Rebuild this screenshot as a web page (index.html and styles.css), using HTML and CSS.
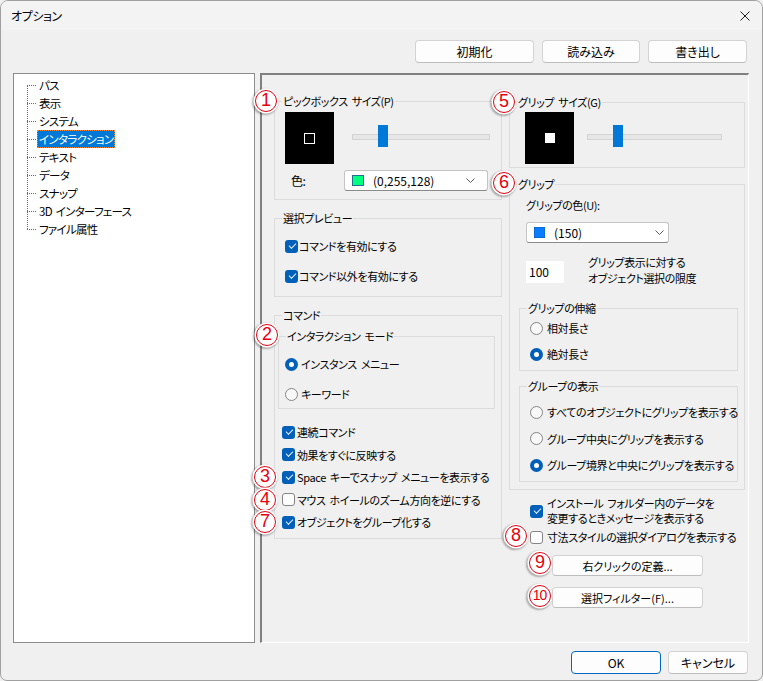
FILE: index.html
```html
<!DOCTYPE html>
<html lang="ja">
<head>
    <meta charset="UTF-8">
    <title>オプション</title>
    <link rel="stylesheet" href="styles.css">
</head>
<body>
<div class="window">
    <div class="titlebar">
        <span class="title">オプション</span>
        <svg class="close" width="10" height="10" viewBox="0 0 10 10">
            <path d="M0.5 0.5L9.5 9.5M9.5 0.5L0.5 9.5" stroke="#1b1b1b" stroke-width="1"/>
        </svg>
    </div>

    <div class="toolbar">
        <button class="btn" id="btn-init">初期化</button>
        <button class="btn" id="btn-load">読み込み</button>
        <button class="btn" id="btn-save">書き出し</button>
    </div>

    <div class="main">
        <ul class="tree">
            <li><span>パス</span></li>
            <li><span>表示</span></li>
            <li><span>システム</span></li>
            <li class="selected"><span>インタラクション</span></li>
            <li><span>テキスト</span></li>
            <li><span>データ</span></li>
            <li><span>スナップ</span></li>
            <li><span>3D インターフェース</span></li>
            <li><span>ファイル属性</span></li>
        </ul>

        <div class="panel">
            <div class="col-left">
                <fieldset class="group">
                    <legend>ピックボックス サイズ(P)</legend>
                    <div class="pick-body">
                        <div class="size-row">
                            <div class="preview"><div class="pick-square"></div></div>
                            <div class="slider slider-pick"><div class="thumb" style="left: 26px"></div></div>
                        </div>
                        <div class="color-row">
                            <span class="color-label">色:</span>
                            <div class="combo combo-pick">
                                <span class="swatch" style="background: #00ff80"></span>
                                <span class="combo-text">(0,255,128)</span>
                                <svg class="chevron" width="9" height="5" viewBox="0 0 9 5"><path d="M0.5 0.5L4.5 4.5L8.5 0.5" fill="none" stroke="#5c5c5c"/></svg>
                            </div>
                        </div>
                    </div>
                </fieldset>

                <fieldset class="group group-preview">
                    <legend>選択プレビュー</legend>
                    <div class="preview-body">
                        <div class="check"><span class="cb on"></span>コマンドを有効にする</div>
                        <div class="check"><span class="cb on"></span>コマンド以外を有効にする</div>
                    </div>
                </fieldset>

                <fieldset class="group group-command">
                    <legend>コマンド</legend>
                    <div class="command-body">
                        <fieldset class="group">
                            <legend>インタラクション モード</legend>
                            <div class="mode-body">
                                <div class="radio"><span class="rb on"></span>インスタンス メニュー</div>
                                <div class="radio"><span class="rb"></span>キーワード</div>
                            </div>
                        </fieldset>
                        <div class="command-checks">
                            <div class="check"><span class="cb on"></span>連続コマンド</div>
                            <div class="check"><span class="cb on"></span>効果をすぐに反映する</div>
                            <div class="check"><span class="cb on"></span>Space キーでスナップ メニューを表示する</div>
                            <div class="check"><span class="cb off"></span>マウス ホイールのズーム方向を逆にする</div>
                            <div class="check"><span class="cb on"></span>オブジェクトをグループ化する</div>
                        </div>
                    </div>
                </fieldset>
            </div>

            <div class="col-right">
                <fieldset class="group">
                    <legend>グリップ サイズ(G)</legend>
                    <div class="gripsize-body">
                        <div class="size-row">
                            <div class="preview"><div class="grip-square"></div></div>
                            <div class="slider slider-grip"><div class="thumb" style="left: 26px"></div></div>
                        </div>
                    </div>
                </fieldset>

                <fieldset class="group group-grip">
                    <legend>グリップ</legend>
                    <div class="grip-body">
                        <div class="grip-label">グリップの色(U):</div>
                        <div class="combo combo-grip">
                            <span class="swatch" style="background: #0a7cff"></span>
                            <span class="combo-text">(150)</span>
                            <svg class="chevron" width="9" height="5" viewBox="0 0 9 5"><path d="M0.5 0.5L4.5 4.5L8.5 0.5" fill="none" stroke="#5c5c5c"/></svg>
                        </div>
                        <div class="limit-row">
                            <div class="textbox">100</div>
                            <div class="limit-label">グリップ表示に対する<br>オブジェクト選択の限度</div>
                        </div>
                        <fieldset class="group group-stretch">
                            <legend>グリップの伸縮</legend>
                            <div class="stretch-body">
                                <div class="radio"><span class="rb"></span>相対長さ</div>
                                <div class="radio"><span class="rb on"></span>絶対長さ</div>
                            </div>
                        </fieldset>
                        <fieldset class="group group-display">
                            <legend>グループの表示</legend>
                            <div class="display-body">
                                <div class="radio"><span class="rb"></span>すべてのオブジェクトにグリップを表示する</div>
                                <div class="radio"><span class="rb"></span>グループ中央にグリップを表示する</div>
                                <div class="radio"><span class="rb on"></span>グループ境界と中央にグリップを表示する</div>
                            </div>
                        </fieldset>
                    </div>
                </fieldset>

                <div class="check check-two"><span class="cb on"></span><span>インストール フォルダー内のデータを<br>変更するときメッセージを表示する</span></div>
                <div class="check check-dim"><span class="cb off"></span>寸法スタイルの選択ダイアログを表示する</div>
                <button class="btn btn-side btn-right">右クリックの定義...</button>
                <button class="btn btn-side btn-filter">選択フィルター(F)...</button>
            </div>

            <span class="mark m1">1</span>
            <span class="mark m2">2</span>
            <span class="mark m3">3</span>
            <span class="mark m4">4</span>
            <span class="mark m7">7</span>
            <span class="mark m5">5</span>
            <span class="mark m6">6</span>
            <span class="mark m8">8</span>
            <span class="mark m9">9</span>
            <span class="mark m10">10</span>
        </div>
    </div>

    <div class="footer">
        <button class="btn btn-ok">OK</button>
        <button class="btn btn-cancel">キャンセル</button>
    </div>
</div>
</body>
</html>
```

FILE: styles.css
```css
* {
    margin: 0;
    padding: 0;
    box-sizing: border-box;
}
body {
    font-family: "Noto Sans CJK JP", "Noto Sans", sans-serif;
    font-size: 11px;
    letter-spacing: -0.4px;
    word-spacing: 2px;
    font-feature-settings: "palt";
    color: #000;
    background: #f0f0f0;
}
.window {
    width: 763px;
    height: 681px;
    background: #f0f0f0;
    border: 1px solid #a0a0a0;
    border-radius: 8px 8px 7px 7px;
    overflow: hidden;
}
.titlebar {
    height: 29px;
    line-height: 29px;
    display: flex;
    align-items: center;
    justify-content: space-between;
    padding: 0 12px 0 10px;
    background: #f3f3f3;
}
.title {
    font-size: 12px;
}
.toolbar {
    display: flex;
    justify-content: flex-end;
    gap: 8px;
    padding: 10px 15px 0 0;
}
.btn {
    height: 23px;
    font: inherit;
    color: #000;
    background: #fdfdfd;
    border: 1px solid #d3d3d3;
    border-bottom-color: #bdbdbd;
    border-radius: 4px;
}
.toolbar .btn {
    font-size: 12px;
}
#btn-init { width: 119px; }
#btn-load { width: 98px; }
#btn-save { width: 99px; }

.main {
    display: flex;
    gap: 5px;
    padding-left: 12px;
    margin-top: 10px;
}
.tree {
    width: 242px;
    height: 570px;
    background: #fff;
    border: 1px solid #8c8c8c;
    list-style: none;
    padding-top: 2px;
    font-size: 11.5px;
    letter-spacing: -0.7px;
}
.tree li {
    position: relative;
    height: 18px;
    line-height: 18px;
    padding-left: 23px;
}
.tree li span {
    display: inline-block;
    height: 18px;
    padding: 0 2px;
}
.tree li::before {
    content: "";
    position: absolute;
    left: 13px;
    top: 9px;
    width: 9px;
    border-top: 1px dotted #6a6a6a;
}
.tree li::after {
    content: "";
    position: absolute;
    left: 13px;
    top: 9px;
    height: 18px;
    border-left: 1px dotted #6a6a6a;
}
.tree li:last-child::after {
    display: none;
}
.tree li.selected span {
    background: #0078d7;
    color: #fff;
    outline: 1px dotted #ff8728;
    outline-offset: -1px;
}

.panel {
    position: relative;
    display: flex;
    width: 489px;
    height: 570px;
    border-top: 2px solid #808080;
    border-left: 2px solid #808080;
    border-right: 1px solid #fff;
    border-bottom: 1px solid #fff;
}
.col-left {
    width: 228px;
    margin-left: 12px;
    padding-top: 18px;
}
.col-right {
    width: 236px;
    margin-left: 7px;
    padding-top: 19px;
}
.group {
    border: 1px solid #dcdcdc;
    min-width: 0;
}
.group legend {
    margin-left: 7px;
    padding: 0 1px;
    line-height: 16px;
}

/* rows */
.check, .radio {
    display: flex;
    align-items: center;
    height: 16px;
    line-height: 16px;
    white-space: nowrap;
}
.cb {
    position: relative;
    flex: none;
    width: 13px;
    height: 13px;
    margin-right: 2px;
    border-radius: 3px;
    background: #005fb8;
}
.cb.on::after {
    content: "";
    position: absolute;
    left: 3.5px;
    top: 3px;
    width: 6px;
    height: 3px;
    border-left: 1.2px solid #e8f0fa;
    border-bottom: 1.2px solid #e8f0fa;
    transform: rotate(-45deg);
}
.cb.off {
    background: #fdfdfd;
    border: 1px solid #858585;
}
.rb {
    position: relative;
    flex: none;
    width: 13px;
    height: 13px;
    margin-right: 3px;
    border-radius: 50%;
    border: 1px solid #858585;
    background: #f8f8f8;
}
.rb.on {
    border: none;
    background: #005fb8;
}
.rb.on::after {
    content: "";
    position: absolute;
    left: 4px;
    top: 4px;
    width: 5px;
    height: 5px;
    border-radius: 50%;
    background: #fff;
}

/* size previews and sliders */
.size-row {
    display: flex;
}
.preview {
    flex: none;
    width: 49px;
    height: 52px;
    background: #000;
    display: flex;
    align-items: center;
    justify-content: center;
}
.pick-square {
    width: 11px;
    height: 11px;
    border: 1.5px solid #fff;
}
.grip-square {
    width: 10px;
    height: 10px;
    background: #fff;
}
.slider {
    position: relative;
    height: 22px;
    margin-top: 13px;
}
.slider::before {
    content: "";
    position: absolute;
    left: 0;
    right: 0;
    top: 9px;
    height: 4px;
    background: #e7e7e7;
    border: 1px solid #d4d4d4;
}
.slider-pick {
    width: 138px;
    margin-left: 18px;
}
.slider-grip {
    width: 135px;
    margin-left: 13px;
}
.thumb {
    position: absolute;
    top: 0;
    width: 10px;
    height: 22px;
    background: #0078d7;
}

/* combo boxes */
.combo {
    display: flex;
    align-items: center;
    height: 21px;
    padding-left: 7px;
    background: #fff;
    border: 1px solid #c4c4c4;
    border-bottom-color: #8a8a8a;
    border-radius: 3px;
    font-size: 12px;
    letter-spacing: 0;
}
.swatch {
    flex: none;
    width: 12px;
    height: 11px;
    border: 1px solid #1f6f8f;
}
.combo-text {
    margin-left: 9px;
}
.chevron {
    margin-left: auto;
}
.combo-pick {
    width: 144px;
}
.combo-pick .chevron {
    margin-right: 12px;
}
.combo-grip {
    width: 143px;
    margin: 9px 0 0 7px;
}
.combo-grip .swatch {
    width: 11px;
    border-color: #0a6ad8;
}
.combo-grip .chevron {
    margin-right: 4px;
}

/* left column */
.pick-body {
    padding: 3px 0 8px 10px;
}
.color-row {
    display: flex;
    align-items: center;
    margin-top: 6px;
}
.color-label {
    width: 53px;
    margin-left: 6px;
    font-size: 12px;
}
.group-preview {
    margin-top: 10px;
}
.preview-body {
    display: flex;
    flex-direction: column;
    gap: 14px;
    padding: 12px 0 12px 10px;
}
.preview-body .cb {
    margin-right: 1px;
}
.group-command {
    margin-top: 10px;
}
.command-body {
    padding: 5px 6px 8px 3px;
}
.mode-body {
    display: flex;
    flex-direction: column;
    gap: 14px;
    padding: 12px 0 6px 6px;
}
.command-checks {
    display: flex;
    flex-direction: column;
    gap: 6.5px;
    margin-top: 15px;
    padding-left: 4px;
}

/* right column */
.gripsize-body {
    padding: 2px 0 3px 15px;
}
.group-grip {
    margin-top: 8px;
}
.grip-body {
    padding: 5px 6px 7px 9px;
}
.grip-label {
    line-height: 16px;
    margin-left: 7px;
}
.limit-row {
    display: flex;
    align-items: flex-start;
    margin-top: 12px;
}
.textbox {
    flex: none;
    width: 38px;
    height: 22px;
    line-height: 22px;
    margin: 6px 0 0 7px;
    padding-left: 3px;
    background: #fff;
    font-size: 12px;
    letter-spacing: 0;
}
.limit-label {
    margin-left: 24px;
    line-height: 15.5px;
}
.group-stretch {
    margin-top: 14px;
}
.stretch-body {
    display: flex;
    flex-direction: column;
    gap: 10px;
    padding: 4px 0 8px 10px;
}
.group-display {
    margin-top: 7px;
}
.display-body {
    display: flex;
    flex-direction: column;
    gap: 10.5px;
    padding: 10px 0 8px 10px;
}
.col-right .rb {
    margin-right: 4px;
}
.col-right .cb {
    margin-right: 4px;
}
.check-two {
    height: 30px;
    line-height: 15px;
    margin: 6px 0 0 21px;
}
.check-dim {
    margin: 3px 0 0 21px;
}
.btn-side {
    display: block;
    width: 151px;
    height: 21px;
    margin-left: 43px;
}
.btn-right {
    margin-top: 10px;
}
.btn-filter {
    margin-top: 11px;
}

/* footer */
.footer {
    display: flex;
    justify-content: flex-end;
    gap: 7px;
    padding: 8px 14px 0 0;
}
.footer .btn {
    font-size: 12px;
}
.btn-ok {
    width: 90px;
    border-color: #0067c0;
}
.btn-cancel {
    width: 80px;
}

/* numbered annotations */
.mark {
    position: absolute;
    width: 22px;
    height: 22px;
    border: 1.6px solid #e60012;
    border-radius: 50%;
    background: #fff;
    color: #e60012;
    font-family: "Liberation Sans", sans-serif;
    font-size: 18px;
    letter-spacing: 0;
    line-height: 19px;
    text-align: center;
    box-shadow: 0 0 0 1.5px #fff, -1px 1px 2px 2px rgba(0, 0, 0, 0.3);
}
.m10 {
    font-size: 14px;
    letter-spacing: -1px;
    text-indent: -1px;
}
.m1 { left: -7px; top: 15px; }
.m2 { left: -6px; top: 249px; }
.m3 { left: -8px; top: 391px; }
.m4 { left: -8px; top: 414px; }
.m7 { left: -8px; top: 436px; }
.m5 { left: 231px; top: 16px; }
.m6 { left: 231px; top: 97px; }
.m8 { left: 243px; top: 450px; }
.m9 { left: 267px; top: 477px; }
.m10 { left: 267px; top: 510px; }
```
